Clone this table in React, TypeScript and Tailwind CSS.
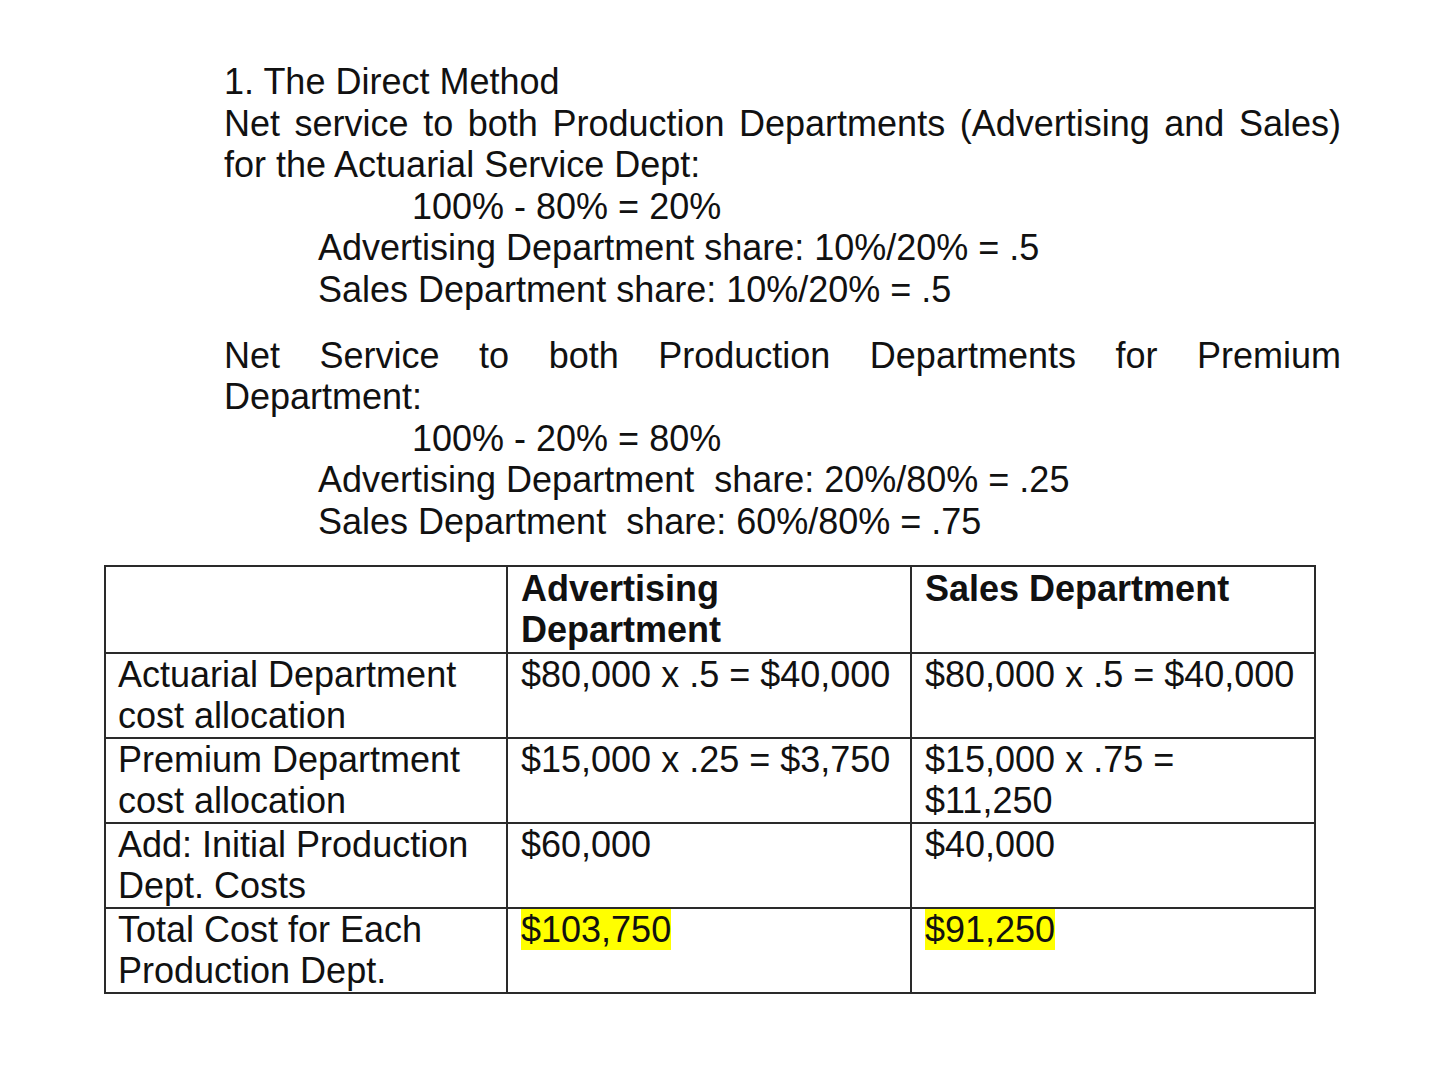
import type { ReactNode } from 'react'

// Scanned-document look: Arial-metric text at 36px, fixed line pitch.
const font = { fontFamily: '"Liberation Sans", Arial, sans-serif' }

export default function App() {
  return (
    <div className="min-h-[1080px] w-[1440px] bg-white text-[#111]" style={font}>
      <div className="pt-[61px] pl-[224px] w-[1341px] text-[36px] leading-[41.6px]">
        <div>1. The Direct Method</div>
        <Justified>Net service to both Production Departments (Advertising and Sales)</Justified>
        <div>for the Actuarial Service Dept:</div>
        <div className="pl-[188px]">100% - 80% = 20%</div>
        <div className="pl-[94px]">Advertising Department share: 10%/20% = .5</div>
        <div className="pl-[94px]">Sales Department share: 10%/20% = .5</div>

        <div className="mt-[24px]">
          <Justified>Net Service to both Production Departments for Premium</Justified>
          <div>Department:</div>
          <div className="pl-[188px]">100% - 20% = 80%</div>
          <div className="pl-[94px] whitespace-pre">Advertising Department  share: 20%/80% = .25</div>
          <div className="pl-[94px] whitespace-pre">Sales Department  share: 60%/80% = .75</div>
        </div>
      </div>

      <div className="pl-[104px] pt-[22px]">
        <table className="w-[1210px] table-fixed border-collapse text-[36px] leading-[41.5px]">
          <colgroup>
            <col className="w-[402px]" />
            <col className="w-[404px]" />
            <col className="w-[404px]" />
          </colgroup>
          <thead>
            <tr>
              <Th></Th>
              <Th>
                Advertising
                <br />
                Department
              </Th>
              <Th>Sales Department</Th>
            </tr>
          </thead>
          <tbody>
            <Row
              label={<>Actuarial Department<br />cost allocation</>}
              a="$80,000 x .5 = $40,000"
              b="$80,000 x .5 = $40,000"
            />
            <Row
              label={<>Premium Department<br />cost allocation</>}
              a="$15,000 x .25 = $3,750"
              b={<>$15,000 x .75 =<br />$11,250</>}
            />
            <Row
              label={<>Add: Initial Production<br />Dept. Costs</>}
              a="$60,000"
              b="$40,000"
            />
            <Row
              label={<>Total Cost for Each<br />Production Dept.</>}
              a={<span className="bg-[#ffff00]">$103,750</span>}
              b={<span className="bg-[#ffff00]">$91,250</span>}
            />
          </tbody>
        </table>
      </div>
    </div>
  )
}

function Justified({ children }: { children: ReactNode }) {
  return <div className="text-justify [text-align-last:justify]">{children}</div>
}

function Th({ children }: { children?: ReactNode }) {
  return (
    <th className="h-[87px] border-2 border-[#2a2a2a] px-[13px] pt-[1px] text-left align-top font-bold">
      {children}
    </th>
  )
}

function Row({ label, a, b }: { label: ReactNode; a: ReactNode; b: ReactNode }) {
  return (
    <tr>
      <td className="h-[85px] border-2 border-[#2a2a2a] px-[12px] align-top whitespace-nowrap">{label}</td>
      <td className="border-2 border-[#2a2a2a] px-[13px] align-top whitespace-nowrap">{a}</td>
      <td className="border-2 border-[#2a2a2a] px-[13px] align-top whitespace-nowrap">{b}</td>
    </tr>
  )
}
